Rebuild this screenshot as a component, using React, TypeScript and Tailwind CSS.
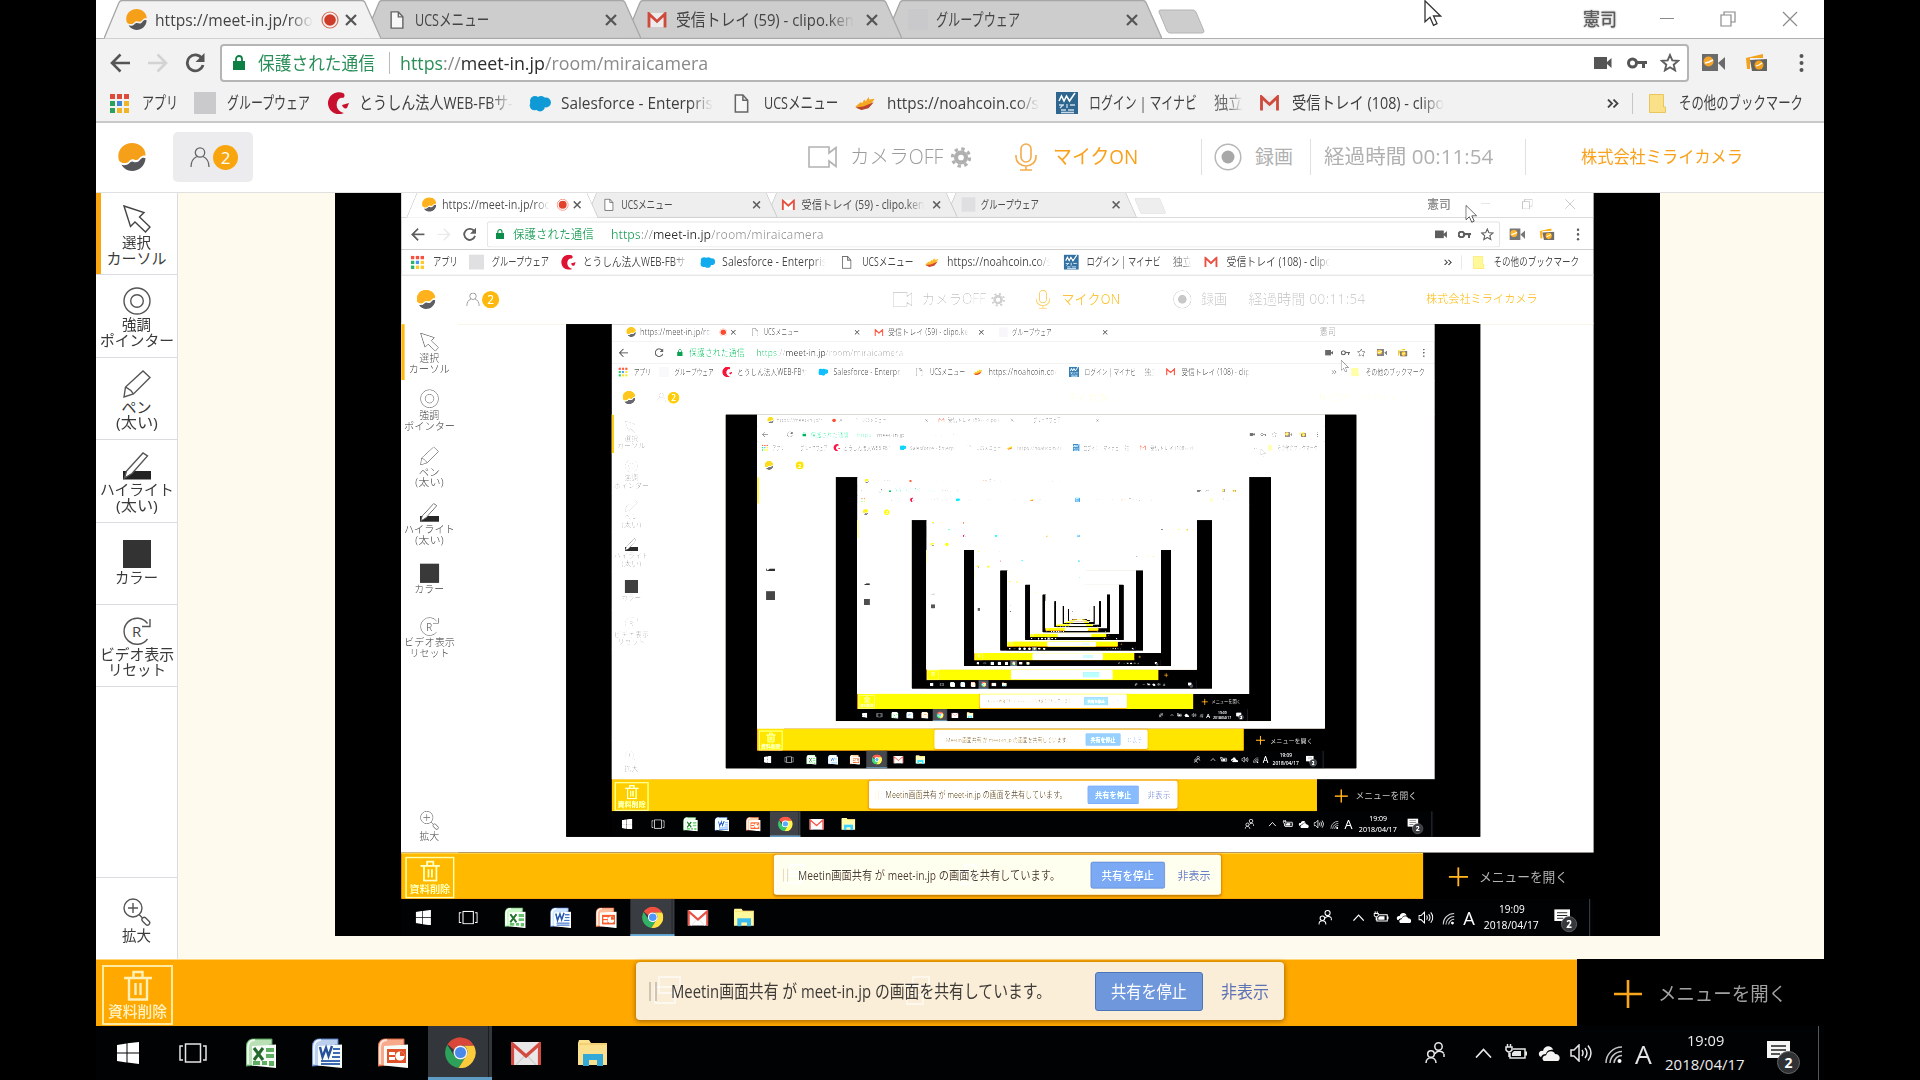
import React, { createContext, useContext, useLayoutEffect, useRef, useState } from "react";

const Depth = createContext(0);
const MAX_DEPTH = 13;
const TEXT_DEPTH = 4;

/** One line of text, condensed or widened to fill the width of its box. */
function Fit({ children, className = "" }: { children: React.ReactNode; className?: string }) {
  const depth = useContext(Depth);
  const box = useRef<HTMLDivElement>(null);
  const line = useRef<HTMLSpanElement>(null);
  const [sx, setSx] = useState(1);
  useLayoutEffect(() => {
    if (box.current && line.current && line.current.offsetWidth > 0) {
      setSx(box.current.offsetWidth / line.current.offsetWidth);
    }
  }, []);
  return (
    <div ref={box} className={"shrink-0 whitespace-nowrap " + className}>
      {depth <= TEXT_DEPTH && (
        <span ref={line} className="inline-block origin-left" style={{ transform: `scaleX(${sx})` }}>
          {children}
        </span>
      )}
    </div>
  );
}

/** Thin, pale strokes get weaker with every generation of the shared picture. */
function useFade() {
  const depth = useContext(Depth);
  return [1, 0.8, 0.62, 0.4, 0.2, 0.08][Math.min(depth, 5)];
}

const MASK = "[mask-image:linear-gradient(to_right,black_85%,transparent_100%)]";

function Logo({ className }: { className: string }) {
  return (
    <svg viewBox="0 0 28 28" className={"shrink-0 " + className}>
      <path d="M1 17.500C-2 8 5 0 14 0c8 0 14 6 13.500 12.500-2-.3-4 .3-5.300 1.800-1.400 1.600-2 2.600-3.700 2.700-1.800.1-3-1.200-5-.6-2.500.8-2.700 3.100-5.500 3.600-2.800.4-5.500-.4-7-2.500z" fill="#f6a01a" />
      <path d="M3.500 21.800c3 .9 5.700.3 7.500-1.300 1.500-1.300 2.300-2.200 4-1.800 1.800.5 3.500 1.100 5.400-.2 1.800-1.200 2-3 3.800-3.600 1.200-.3 2.300-.1 3.300.4C27 23 21 28 14 28c-4.500 0-8.500-2.500-10.500-6.200z" fill="#55565a" />
    </svg>
  );
}

function PageIcon({ className }: { className: string }) {
  return (
    <svg viewBox="0 0 15 20" className={"shrink-0 " + className} fill="#f7f7f7" stroke="#666" strokeWidth="1.600">
      <path d="M1 1h8l5 5.500V19H1z" />
      <path d="M9 1v5.500h5" fill="none" />
    </svg>
  );
}

function GmailM({ className }: { className: string }) {
  return (
    <svg viewBox="0 0 20 17" className={"shrink-0 " + className}>
      <rect x="1" y="1" width="18" height="15" fill="#ececec" />
      <path d="M1.500 16.500V2L10 10l8.500-8v14.500" fill="none" stroke="#cf4a3c" strokeWidth="3" />
    </svg>
  );
}

function Cross({ className }: { className: string }) {
  return (
    <svg viewBox="0 0 12 12" className={"shrink-0 " + className} stroke="#555" strokeWidth="2.200">
      <path d="M1 1l10 10M11 1L1 11" />
    </svg>
  );
}

function Tab({ active, z, icon, children, rec, textClass }: { active?: boolean; z: string; icon: React.ReactNode; children: React.ReactNode; rec?: boolean; textClass: string }) {
  const depth = useContext(Depth);
  const idle = ["#cdcdcd", "#d6d6d6", "#f4f4f4"][Math.min(depth, 2)];
  const edge = ["#a6a6a6", "#b4b4b4", "#c6c6c6", "#e8e8e8"][Math.min(depth, 3)];
  return (
    <div className={"relative -mr-[16.600px] flex h-[39px] w-[277px] shrink-0 items-center " + z}>
      <svg viewBox="0 0 277 39" className="absolute inset-0 h-full w-full">
        <path d="M0 38.500L15 2.500Q16 .5 18 .5H258Q260 .5 261 2.500L277 38.500z" fill={active ? "#f2f2f2" : idle} />
        <path d="M0 38.500L15 2.500Q16 .5 18 .5H258Q260 .5 261 2.500L277 38.500" fill="none" stroke={edge} strokeWidth="1.300" />
        {!active && <path d="M0 38.300H277" stroke={edge} />}
      </svg>
      <div className="relative flex h-full w-full items-center">
        <div className="ml-[22px] flex w-[29px] shrink-0 items-center">{icon}</div>
        <Fit className={"text-[17px] leading-[22px] " + textClass}>{children}</Fit>
        {rec && (
          <svg viewBox="0 0 18 18" className="ml-[8px] h-[18px] w-[18px]">
            <circle cx="9" cy="9" r="8" fill="none" stroke="#d2503c" strokeWidth="1.200" opacity=".8" />
            <circle cx="9" cy="9" r="5.800" fill="#cc3c28" />
          </svg>
        )}
        <Cross className="absolute left-[241px] top-[14px] h-[12px] w-[12px]" />
      </div>
    </div>
  );
}

function TabStrip() {
  const fade = useFade();
  return (
    <div className="flex h-[39px] shrink-0 items-start border-b border-[#b0b0b0] bg-white pl-[8px]">
      <Tab active z="z-40" rec icon={<Logo className="h-[21px] w-[21px]" />} textClass={"w-[158px] " + MASK}>https://meet-in.jp/roo</Tab>
      <Tab z="z-30" icon={<PageIcon className="ml-1 h-[18px] w-[14px]" />} textClass="w-[74px]">UCSメニュー</Tab>
      <Tab z="z-20" icon={<GmailM className="h-[16px] w-[20px]" />} textClass={"w-[178px] " + MASK}>受信トレイ (59) - clipo.ken</Tab>
      <Tab z="z-10" icon={<div className="ml-px h-[21px] w-[20px] bg-[#c9c8cb]" />} textClass="w-[84px]">グループウェア</Tab>
      <svg viewBox="0 0 48 25" className="ml-[12px] mt-[9px] h-[25px] w-[48px] shrink-0" style={{ opacity: fade }}>
        <path d="M2 1h33q2 0 3 2l8 19q0 2-2 2H12q-2 0-3-2L1 3q0-2 1-2z" fill="#cdcdcd" stroke="#b4b4b4" />
      </svg>
      <div className="ml-auto flex h-[38px] items-center" style={{ opacity: fade }}>
        <Fit className="w-[34px] text-[18px] leading-[24px] text-[#5a5a5a] [text-shadow:0_0_2px_#777,0_0_1px_#999]">憲司</Fit>
        <svg viewBox="0 0 14 14" className="ml-[43px] h-[14px] w-[14px]" stroke="#8a8a8a"><path d="M0 6.500h14" /></svg>
        <svg viewBox="0 0 16 16" className="ml-[46px] h-[16px] w-[16px]" fill="none" stroke="#8a8a8a" strokeWidth="1.200"><path d="M1 4h10v11H1zM4 4V1h11v10h-4" /></svg>
        <svg viewBox="0 0 16 16" className="ml-[46px] mr-[26px] h-[16px] w-[16px]" fill="none" stroke="#8a8a8a" strokeWidth="1.200"><path d="M1 1l14 14M15 1L1 15" /></svg>
      </div>
    </div>
  );
}

function AddressBar() {
  const depth = useContext(Depth);
  const frame = ["#b5b5b5", "#cfcfcf", "#ffffff"][Math.min(depth, 2)];
  return (
    <div className="flex h-[46px] shrink-0 items-center bg-[#f2f2f2] pl-[14px] pt-px">
      <svg viewBox="0 0 20 20" className="h-[20px] w-[20px]" fill="none" stroke="#555" strokeWidth="2.600"><path d="M20 10H2M10.500 1.500L2 10l8.500 8.500" /></svg>
      <svg viewBox="0 0 20 20" className="ml-[18px] h-[20px] w-[20px]" fill="none" stroke="#d3d3d3" strokeWidth="2.600"><path d="M0 10h18M9.500 1.500L18 10l-8.500 8.500" /></svg>
      <svg viewBox="0 0 20 20" className="ml-[17px] h-[20px] w-[20px]" fill="none" stroke="#555" strokeWidth="2.800">
        <path d="M17 5.500A8 8 0 1 0 18 12" />
        <path d="M19.500 0v9h-9z" fill="#555" stroke="none" />
      </svg>
      <div className="ml-[15px] flex h-[38px] w-[1469px] items-center rounded-[4px] border-2 bg-white" style={{ borderColor: frame }}>
        <svg viewBox="0 0 12 15" className="ml-[11px] h-[15px] w-[12px]" fill="#0b8043"><path d="M0 6h12v9H0z" /><path d="M3 7V4a3 3 0 0 1 6 0v3" fill="none" stroke="#0b8043" strokeWidth="1.800" /></svg>
        <Fit className="ml-[13px] w-[117px] pt-px text-[18px] leading-[26px] text-[#2a8f58]">保護された通信</Fit>
        <div className="ml-[14px] h-[22px] w-px" style={{ backgroundColor: depth ? "#ffffff" : "#bbbbbb" }} />
        <Fit className="ml-[10px] w-[308px] pt-px text-[18px] leading-[26px] text-[#8a8a8a]">
          <span className="text-[#2a8f58]">https</span>://<span className="text-[#2c2c2c]">meet-in.jp</span>/room/miraicamera
        </Fit>
        <svg viewBox="0 0 18 12" className="ml-auto h-[12px] w-[18px]" fill="#555"><path d="M0 0h13v12H0zM13 5l4.500-4v10L13 7z" /></svg>
        <svg viewBox="0 0 20 12" className="ml-[15px] h-[12px] w-[20px]" fill="none" stroke="#555" strokeWidth="3"><circle cx="5.500" cy="6" r="4" /><path d="M9 5.500h11M16.500 5.500V11" /></svg>
        <svg viewBox="0 0 20 19" className="ml-[13px] mr-[7px] h-[19px] w-[20px]" fill="none" stroke="#5f5f5f" strokeWidth="1.900"><path d="M10 2l2.300 5.400 5.900.5-4.500 3.800 1.400 5.700L10 14.300l-5.100 3.100 1.400-5.700L1.800 7.900l5.900-.5z" /></svg>
      </div>
      <svg viewBox="0 0 23 17" className="ml-[13px] h-[17px] w-[23px]"><path d="M0 0h16v17H0z" fill="#6b6b6b" /><path d="M16 9l7-6v13z" fill="#6b6b6b" /><circle cx="6.500" cy="7.500" r="5" fill="#f6a52c" /><path d="M3 9l4-1 4-2" stroke="#fff" strokeWidth="1.500" fill="none" /></svg>
      <svg viewBox="0 0 22 18" className="ml-[21px] h-[18px] w-[22px]"><path d="M0 4L17 0v4H4v11H1z" fill="#f3a21e" /><path d="M4 6l17-1v12H6z" fill="#66625e" /><circle cx="13" cy="11" r="4.500" fill="#f3a21e" /><path d="M10 12l3-1 3-2" stroke="#fff" strokeWidth="1.300" fill="none" /></svg>
      <svg viewBox="0 0 4 18" className="ml-[31px] h-[18px] w-[5px]" fill="#555"><circle cx="2" cy="2" r="2" /><circle cx="2" cy="9" r="2" /><circle cx="2" cy="16" r="2" /></svg>
    </div>
  );
}

function BookmarkBar() {
  const dots = ["#dd4b39", "#dd4b39", "#dd4b39", "#2d9f5c", "#4285d8", "#f0b429", "#2d9f5c", "#f0b429", "#f0b429"];
  const label = "text-[17px] leading-[24px] text-[#3f3f3f] ";
  return (
    <div className="flex h-[38px] shrink-0 items-center border-b-2 border-[#c9c9c9] bg-[#f2f2f2] pl-[14px]">
      <div className="grid h-[19px] w-[19px] shrink-0 grid-cols-3 gap-[2px]">
        {dots.map((c, i) => <div key={i} style={{ backgroundColor: c }} />)}
      </div>
      <Fit className={"ml-[13px] w-[36px] " + label}>アプリ</Fit>
      <div className="ml-[16px] h-[22px] w-[22px] shrink-0 bg-[#cac9cc]" />
      <Fit className={"ml-[11px] w-[83px] " + label}>グループウェア</Fit>
      <svg viewBox="0 0 22 22" className="ml-[17px] h-[22px] w-[22px] shrink-0" fill="#c8102e"><path d="M16 1A11 11 0 1 0 17 21C10 19 8 13 11 8c1-1.500 3-3 5-2 2-1 2-4 0-5z" /><path d="M15 13l7-2-2 5c-2 1-4 0-5-3z" /></svg>
      <Fit className={"ml-[10px] w-[154px] " + MASK + " " + label}>とうしん法人WEB-FBサ-</Fit>
      <svg viewBox="0 0 22 16" className="ml-[16px] h-[17px] w-[22px] shrink-0" fill="#0f9ad6"><circle cx="6" cy="5.500" r="5" /><circle cx="12" cy="5" r="4.500" /><circle cx="17" cy="7" r="4.900" /><circle cx="5.500" cy="10" r="4.800" /><circle cx="11" cy="11" r="4.900" /></svg>
      <Fit className={"ml-[10px] w-[152px] " + MASK + " " + label}>Salesforce - Enterpris</Fit>
      <PageIcon className="ml-[21px] h-[19px] w-[15px]" />
      <Fit className={"ml-[15px] w-[74px] " + label}>UCSメニュー</Fit>
      <svg viewBox="0 0 22 16" className="ml-[16px] h-[14px] w-[22px] shrink-0"><path d="M0 12L6 7l2 1 2-4 2 2 3-5 1 3 6-1-6 9-9 4z" fill="#f5a623" /><path d="M0 13l9-1 12-5-6 7-8 2z" fill="#b8432f" /></svg>
      <Fit className={"ml-[11px] w-[152px] " + MASK + " " + label}>https://noahcoin.co/s</Fit>
      <svg viewBox="0 0 22 22" className="ml-[17px] h-[22px] w-[22px] shrink-0"><path d="M0 0h22v22H0z" fill="#2f6690" /><path d="M3 9l2.500-5L8 9l2.500-5 3 5L19 1" stroke="#fff" strokeWidth="1.500" fill="none" /><path d="M3 13h5M7 13l-3 3M11 12v4M14 13h5M5 18h5M12 18h6M5 20.500h13" stroke="#c9dbe8" strokeWidth="1.300" fill="none" /></svg>
      <Fit className={"ml-[11px] w-[108px] " + label}>ログイン | マイナビ</Fit>
      <Fit className={"ml-[17px] w-[29px] opacity-75 [mask-image:linear-gradient(to_right,black_50%,transparent_100%)] " + label}>独立</Fit>
      <GmailM className="ml-[16px] h-[16px] w-[21px]" />
      <Fit className={"ml-[12px] w-[152px] " + MASK + " " + label}>受信トレイ (108) - clipo</Fit>
      <svg viewBox="0 0 12 9" className="ml-[163px] h-[9px] w-[12px] shrink-0" fill="none" stroke="#444" strokeWidth="1.800"><path d="M1 .5l4 4-4 4M6.500 .5l4 4-4 4" /></svg>
      <div className="ml-[13px] h-[21px] w-px shrink-0 bg-[#c6c6c6]" />
      <svg viewBox="0 0 17 19" className="ml-[16px] h-[19px] w-[17px] shrink-0"><path d="M.5.500h14v12.500h2v5.500H.5z" fill="#fbe08a" stroke="#e9c65a" /></svg>
      <Fit className={"ml-[13px] w-[124px] " + label}>その他のブックマーク</Fit>
    </div>
  );
}

function AppHeader() {
  const fade = useFade();
  const depth = useContext(Depth);
  const dim = [1, 0.85, 0.4, 0.1, 0][Math.min(depth, 4)];
  const rule = depth ? "#ffffff" : "#e0e0e0";
  return (
    <div className="flex h-[70px] shrink-0 items-center border-b bg-white pb-px" style={{ borderColor: rule }}>
      <Logo className="ml-[22px] h-[28px] w-[28px]" />
      <div className="ml-[27px] flex h-[50px] w-[80px] shrink-0 items-center rounded-[5px] bg-[#ececee] pl-[17px]">
        <svg viewBox="0 0 20 20" className="h-[20px] w-[20px]" fill="none" stroke="#666" strokeWidth="1.300" style={{ opacity: fade }}><circle cx="10" cy="5.500" r="4.700" /><path d="M1 20c0-6 2.500-9 6-10.500M19 20c0-6-2.500-9-6-10.500" /></svg>
        <div className="ml-[3px] flex h-[25px] w-[25px] items-center justify-center rounded-full bg-[#f9a60e] text-[17px] leading-none text-white">{depth <= TEXT_DEPTH && "2"}</div>
      </div>
      <div className="flex grow items-center" style={{ opacity: dim }}>
        <svg viewBox="0 0 29 22" className="ml-[555px] h-[22px] w-[29px] shrink-0" fill="none" stroke="#b2b2b2" strokeWidth="1.600"><path d="M1 1h20v6l7-5.500v19L21 15v6H1z" /></svg>
        <Fit className="ml-[13px] w-[93px] text-[20px] font-light leading-[26px] text-[#9c9c9c]">カメラOFF</Fit>
        <svg viewBox="0 0 22 22" className="ml-[7px] h-[21px] w-[22px] shrink-0" fill="none" stroke="#b0b0b0"><circle cx="11" cy="11" r="5.200" strokeWidth="4.400" /><circle cx="11" cy="11" r="9" strokeWidth="3.400" strokeDasharray="3.500 3.570" /></svg>
        <svg viewBox="0 0 22 28" className="ml-[43px] h-[28px] w-[22px] shrink-0" fill="none" stroke="#f3ac4c" strokeWidth="1.600"><rect x="6" y="1" width="10" height="18" rx="5" /><path d="M1 12v2a10 9 0 0 0 20 0v-2M11 23v4M5 27h12" /></svg>
        <Fit className="ml-[16px] w-[85px] text-[20px] leading-[26px] text-[#f9a11b]">マイクON</Fit>
        <div className="ml-[63px] h-[36px] w-px" style={{ backgroundColor: rule }} />
        <svg viewBox="0 0 28 28" className="ml-[12px] h-[28px] w-[28px] shrink-0"><circle cx="14" cy="14" r="12.800" fill="none" stroke="#b8b8b8" strokeWidth="1.500" /><circle cx="14" cy="14" r="6.500" fill="#a8a8a8" /></svg>
        <Fit className="ml-[13px] w-[38px] text-[19px] leading-[26px] text-[#b0b0b0]">録画</Fit>
        <div className="ml-[17px] h-[36px] w-px" style={{ backgroundColor: rule }} />
        <Fit className="ml-[13px] w-[169px] text-[20px] leading-[26px] text-[#b0b0b0]">経過時間 00:11:54</Fit>
        <div className="ml-[32px] h-[36px] w-px" style={{ backgroundColor: rule }} />
        <Fit className="ml-[55px] w-[162px] text-[17px] leading-[26px] text-[#f9a11b]">株式会社ミライカメラ</Fit>
      </div>
    </div>
  );
}

function Tool({ icon, lines, className = "", on }: { icon: React.ReactNode; lines: [string, string][]; className?: string; on?: boolean }) {
  const fade = useFade();
  const depth = useContext(Depth);
  return (
    <div className={"relative flex h-[82.400px] shrink-0 flex-col items-center pt-[12px] " + className} style={{ borderColor: depth ? "#ffffff" : "#dcdce0" }}>
      {on && <div className="absolute left-0 top-0 h-full w-[5px] bg-[#f9a610]" />}
      {icon}
      <div className="mt-[2px] flex flex-col items-center" style={{ opacity: fade }}>
        {lines.map(([t, w]) => <Fit key={t} className={"text-[15px] leading-[15.500px] text-[#3a3a3a] " + w}>{t}</Fit>)}
      </div>
    </div>
  );
}

function Sidebar() {
  const fade = useFade();
  const depth = useContext(Depth);
  const svg = "h-[28px] w-[28px] shrink-0";
  return (
    <div className="flex w-[82px] shrink-0 flex-col border-r bg-white" style={{ borderColor: depth ? "#ffffff" : "#dcdce0" }}>
      <Tool on className="border-b" lines={[["選択", "w-[29px]"], ["カーソル", "w-[60px]"]]} icon={
        <svg viewBox="0 0 28 28" className={svg} style={{ opacity: fade }} fill="none" stroke="#444" strokeWidth="1.400"><path d="M1 1l20 6.500-4.500 4.500L27 22l-4.500 5L12 17l-4.500 4.500z" /></svg>} />
      <Tool className="border-b" lines={[["強調", "w-[29px]"], ["ポインター", "w-[74px]"]]} icon={
        <svg viewBox="0 0 28 28" className={svg} style={{ opacity: fade }} fill="none" stroke="#555" strokeWidth="1.400"><circle cx="14" cy="14" r="13" /><circle cx="14" cy="14" r="6.300" /></svg>} />
      <Tool className="border-b" lines={[["ペン", "w-[30px]"], ["(太い)", "w-[42px]"]]} icon={
        <svg viewBox="0 0 28 28" className={svg} style={{ opacity: fade }} fill="none" stroke="#555" strokeWidth="1.400"><path d="M1 27l1.500-10L20 1l7 6.500L10.500 24zM2.500 17c2 1 5 2 8 7" /></svg>} />
      <Tool className="border-b" lines={[["ハイライト", "w-[74px]"], ["(太い)", "w-[42px]"]]} icon={
        <svg viewBox="0 0 28 28" className={svg}><path d="M0 19h28v8.500H0z" fill="#222" /><path d="M1.500 26l2-7L20 1l4.500 3L9 21.500z" fill="#fff" stroke="#555" strokeWidth="1.400" /></svg>} />
      <Tool className="border-b pt-[17px]" lines={[["カラー", "w-[43px]"]]} icon={<div className="h-[28px] w-[28px] shrink-0 bg-[#333]" />} />
      <Tool className="border-b" lines={[["ビデオ表示", "w-[74px]"], ["リセット", "w-[58px]"]]} icon={
        <svg viewBox="0 0 28 28" className={svg} style={{ opacity: fade }} fill="none" stroke="#555" strokeWidth="1.400">
          <path d="M24.500 6.500A13 13 0 1 0 24.500 22M27 2v7.500h-8" />
          {depth <= TEXT_DEPTH && <text x="9" y="20" fontSize="15" fill="#444" stroke="none">R</text>}
        </svg>} />
      <Tool className="mt-auto border-t pt-[20px]" lines={[["拡大", "w-[29px]"]]} icon={
        <svg viewBox="0 0 28 28" className={svg} style={{ opacity: fade }} fill="none" stroke="#555" strokeWidth="1.400"><circle cx="10" cy="10" r="9" /><path d="M10 5v10M5 10h10M16 16.500l3.500 3.500" /><rect x="18.500" y="21" width="9" height="4.500" rx="2.200" transform="rotate(45 23 23)" /></svg>} />
    </div>
  );
}

function SharePopup() {
  return (
    <div className="relative flex h-[58px] w-[648px] items-center rounded-[4px] bg-[#fbeed8] shadow-[0_1px_4px_1px_rgba(110,70,0,0.55)]">
      <div className="absolute left-[22px] top-[14px] h-[18px] w-[23px] border-2 border-white/60" />
      <div className="absolute left-[18px] top-[24px] h-[18px] w-[22px] border-2 border-white/60" />
      <div className="absolute left-[276px] top-[14px] h-[20px] w-[18px] border-2 border-white/50" />
      <div className="absolute left-[270px] top-[23px] h-[20px] w-[18px] border-2 border-white/50" />
      <div className="relative ml-[13px] h-[19px] w-[8px] border-x-2 border-[#cfc5b3]" />
      <Fit className="relative ml-[14px] w-[380px] text-[18px] leading-[26px] text-[#3d3a36]">Meetin画面共有 が meet-in.jp の画面を共有しています。</Fit>
      <div className="relative ml-[44px] mt-px flex h-[39px] w-[108px] items-center justify-center rounded-[3px] border border-[#4c74b8] bg-[#6f98dc]">
        <Fit className="w-[76px] text-[17px] leading-[24px] text-white">共有を停止</Fit>
      </div>
      <Fit className="relative ml-[18px] w-[48px] pt-px text-[17px] leading-[24px] text-[#5b72b4]">非表示</Fit>
    </div>
  );
}

function BottomBar() {
  return (
    <div className="flex h-[67px] shrink-0 bg-black">
      <div className="flex w-[1481px] items-start bg-[#ffa800] shadow-[inset_0_1px_0_#ffd67a]">
        <div className="ml-[6px] mt-[6px] flex h-[60px] w-[71px] flex-col items-center border-2 border-[#ffeaa0] pt-[3px]">
          <svg viewBox="0 0 30 31" className="h-[31px] w-[30px] shrink-0" fill="none" stroke="#fff0b8" strokeWidth="2.400"><path d="M1 8h28M10.500 8V2h9v6M6 8v21.500h18V8M12.500 13v12M17.500 13v12" /></svg>
          <Fit className="mt-px w-[59px] text-[15px] font-medium leading-[18px] text-[#fff3c4]">資料削除</Fit>
        </div>
        <div className="ml-[463px] mt-[3px]"><SharePopup /></div>
      </div>
      <div className="flex items-center">
        <svg viewBox="0 0 28 28" className="ml-[37px] mt-[2px] h-[28px] w-[28px]" stroke="#f9a61a" strokeWidth="2.600"><path d="M14 0v28M0 14h28" /></svg>
        <Fit className="ml-[16px] w-[129px] pt-[2px] text-[19px] leading-[28px] text-[#a2a2a2]">メニューを開く</Fit>
      </div>
    </div>
  );
}

function OfficeIcon({ className, dark, light, children }: { className: string; dark: string; light: string; children: React.ReactNode }) {
  return (
    <svg viewBox="0 0 31 31" className={"h-[31px] w-[31px] shrink-0 " + className}>
      <path d="M7 1h19v6h-3v19L0 28V10C0 4 3 1 7 1z" fill={light} stroke={dark} strokeWidth="1" />
      <path d="M9 2C4 2 2 5 2 10v16" fill="none" stroke="#fff" strokeWidth="2" opacity=".7" />
      <path d="M6 8l24-1.500V30L6 27.500z" fill="#f7fbf7" />
      {children}
    </svg>
  );
}

function Taskbar() {
  const depth = useContext(Depth);
  return (
    <div className="flex h-[54px] shrink-0 items-center bg-[#010204]">
      <svg viewBox="0 0 22 22" className="ml-[21px] h-[22px] w-[22px] shrink-0" fill="#fff"><path d="M0 3l9.500-1.500v9H0zM10.500 1.300L22 0v10.500H10.500zM0 11.500h9.500v9L0 19zM10.500 11.500H22V22l-11.500-1.400z" /></svg>
      <svg viewBox="0 0 28 20" className="ml-[40px] h-[20px] w-[28px] shrink-0" fill="none" stroke="#e6e6e6" strokeWidth="1.500"><path d="M6.500 1h15v18h-15zM4 3H1v14h3M24 3h3v14h-3" /></svg>
      <OfficeIcon className="ml-[39px]" dark="#4b9a50" light="#b9dfb5">
        <path d="M8 10l9 12M17 10L8 22" stroke="#23692c" strokeWidth="3" />
        <path d="M20 10h8v4h-8zM20 16h8v4h-8zM7 23h7v4H7zM16 23h5v4h-5zM23 23h5v5h-5z" fill="#5fae62" />
      </OfficeIcon>
      <OfficeIcon className="ml-[35px]" dark="#4d78bd" light="#bcd0ee">
        <path d="M8 9l2.500 10L14 10l2.500 8L20 8" stroke="#27509c" strokeWidth="2.400" fill="none" />
        <path d="M21 11h7M21 15h7M20 19h8M9 23h19M9 26h19" stroke="#3d69b3" strokeWidth="2" />
      </OfficeIcon>
      <OfficeIcon className="ml-[35px]" dark="#d9633a" light="#f7a98c">
        <path d="M9 11h19v14H9z" fill="#e0532a" /><path d="M11 14h6v3h-6zM11 19h6v3h-6z" fill="#fff" /><circle cx="22" cy="18" r="4.600" fill="#fff" /><path d="M22 18v-4.600a4.600 4.600 0 0 1 4.600 4.600z" fill="#e0532a" />
      </OfficeIcon>
      <div className="ml-[19px] flex h-full w-[64px] shrink-0 items-center border-b-[3px] border-[#5f9cc4] bg-[#33363a]">
        <svg viewBox="0 0 32 32" className="ml-[17px] mt-[2px] h-[31px] w-[31px]">
          <path d="M2.500 7.500A16 16 0 0 1 30 9H16a7 7 0 0 0-6.500 4.500z" fill="#d9473a" />
          <path d="M2.300 8A16 16 0 0 0 14 32l7-11a7 7 0 0 1-11.500-2z" fill="#2da05a" />
          <path d="M30 9a16 16 0 0 1-16 23l7.500-12A7 7 0 0 0 19 9z" fill="#fbcb3c" />
          <circle cx="16" cy="16" r="7.200" fill="#f3f3f3" /><circle cx="16" cy="16" r="5.700" fill="#4a88ea" />
        </svg>
        <div className="ml-[12px] h-full w-px bg-[#1a1c1f]" />
      </div>
      <svg viewBox="0 0 30 23" className="ml-[19px] h-[23px] w-[30px] shrink-0"><path d="M0 0h30v23H0z" fill="#e9e7e8" /><path d="M5 23L15 12l10 11" fill="none" stroke="#d2d0d2" strokeWidth="1.500" /><path d="M1.500 23V2L15 14 28.500 2v21" fill="none" stroke="#d24a40" strokeWidth="3.200" /></svg>
      <svg viewBox="0 0 30 26" className="ml-[37px] h-[26px] w-[30px] shrink-0"><path d="M1 0h10l2 3h16v22H0V3z" fill="#fbe08e" /><path d="M1 4h28" stroke="#e8c25a" /><path d="M5 26V14h20v12h-6v-6h-8v6z" fill="#34a9d8" /></svg>

      <svg viewBox="0 0 20 22" className="ml-auto h-[22px] w-[20px] shrink-0" fill="none" stroke="#e8e8e8" strokeWidth="1.500"><circle cx="13.500" cy="4.500" r="3.700" /><path d="M10 12c1-3 6-4 9-.5M19 12v3" /><circle cx="6" cy="12" r="3.300" /><path d="M1 21c0-7 10-7 10 0" /></svg>
      <svg viewBox="0 0 17 10" className="ml-[30px] h-[10px] w-[17px] shrink-0" fill="none" stroke="#e8e8e8" strokeWidth="1.700"><path d="M1 9.500L8.500 1.500 16 9.500" /></svg>
      <svg viewBox="0 0 22 18" className="ml-[13px] h-[18px] w-[22px] shrink-0" fill="none" stroke="#e8e8e8" strokeWidth="1.500"><path d="M8 5h12v9H5v-5M21.500 7.500v4M1 3h6v3q-3 4-6 0zM2.500 0v3M5.500 0v3M4 8v5" /><path d="M9 7h7v5H7V9z" fill="#e8e8e8" stroke="none" /></svg>
      <svg viewBox="0 0 22 15" className="ml-[11px] h-[15px] w-[22px] shrink-0" fill="#f4f4f4"><path d="M3 11C-1 9 1 4 5 5c1-6 9-6 10-1-5-1-7 3-7 4-3 0-4 1-5 3z" /><path d="M6 15c-3-2-1-6 2-5.500C9 4 16 4 17 8c5 0 6 5 3 7z" /></svg>
      <svg viewBox="0 0 22 18" className="ml-[10px] h-[18px] w-[22px] shrink-0" fill="none" stroke="#e8e8e8" strokeWidth="1.500"><path d="M1 6h3l5-5v16l-5-5H1zM12 6q2 3 0 6M15 4q4 5 0 10M18 1.500q6 7.500 0 15" /></svg>
      <svg viewBox="0 0 18 18" className="ml-[13px] mt-[3px] h-[18px] w-[18px] shrink-0" fill="none" stroke="#c4c4c4" strokeWidth="1.500"><path d="M1 17A16 16 0 0 1 17 1M5 17A12 12 0 0 1 17 5.500M9 17a8 8 0 0 1 8-7.500" /><circle cx="14.500" cy="15" r="2" fill="#fff" stroke="none" /></svg>
      <Fit className="ml-[12px] w-[17px] pt-[2px] text-[25px] leading-[30px] text-[#e4e4e4]">A</Fit>
      <div className="-mt-[2px] ml-[13px] flex w-[80px] shrink-0 flex-col items-center">
        <Fit className="w-[37px] text-[15px] leading-[24px] text-[#ececec]">19:09</Fit>
        <Fit className="w-[80px] text-[15px] leading-[24px] text-[#ececec]">2018/04/17</Fit>
      </div>
      <div className="relative ml-[22px] h-[34px] w-[34px] shrink-0">
        <svg viewBox="0 0 23 22" className="mt-[5px] h-[22px] w-[23px]"><path d="M0 0h23v17h-8l-4 5v-5H0z" fill="#f6f6f6" /><path d="M4 5h15M4 9h15M4 13h9" stroke="#222" strokeWidth="1.500" /></svg>
        <div className="absolute -bottom-[4px] left-[10px] flex h-[23px] w-[23px] items-center justify-center rounded-full border border-[#666] bg-[#303236] text-[14px] font-bold leading-none text-white">{depth <= TEXT_DEPTH && "2"}</div>
      </div>
      <div className="ml-[17px] mr-[5px] h-full w-px shrink-0 bg-[#55575c]" />
    </div>
  );
}

/** Pointer tip in each generation's own coordinates; the share lags behind the hand. */
const POINTERS = [
  { left: 1424, top: 0 },
  { left: 1638, top: 20 },
  { left: 1627, top: 78 },
  { left: 1627, top: 105 },
];

function Pointer() {
  const p = POINTERS[useContext(Depth)];
  if (!p) return null;
  return (
    <svg viewBox="0 0 18 27" className="absolute z-50 h-[27px] w-[18px]" style={p} fill="#fff" stroke="#333" strokeWidth="1.300">
      <path d="M1 .8v21l5-4.500 3.500 8 3.500-1.700-3.500-7.600h7z" />
    </svg>
  );
}

function Desktop({ depth }: { depth: number }) {
  return (
    <Depth.Provider value={depth}>
      <div className="relative h-[1080px] w-[1920px] shrink-0 overflow-hidden bg-black pl-[96px] font-['Open_Sans','Noto_Sans_CJK_JP',sans-serif] text-[#444]">
        <div className="flex h-full w-[1728px] flex-col">
          <TabStrip />
          <AddressBar />
          <BookmarkBar />
          <AppHeader />
          <div className="flex h-[766px] shrink-0 bg-[#fffaee]">
            <Sidebar />
            {depth < MAX_DEPTH && (
              <div className="ml-[157px] h-[742.500px] w-[1324.500px] shrink-0 overflow-hidden bg-black">
                <div className="-mt-[2.500px] h-[1080px] w-[1920px] origin-top-left scale-[0.69] brightness-[1.11]">
                  <Desktop depth={depth + 1} />
                </div>
              </div>
            )}
          </div>
          <BottomBar />
          <Taskbar />
        </div>
        <Pointer />
      </div>
    </Depth.Provider>
  );
}

export default function App() {
  return <Desktop depth={0} />;
}
